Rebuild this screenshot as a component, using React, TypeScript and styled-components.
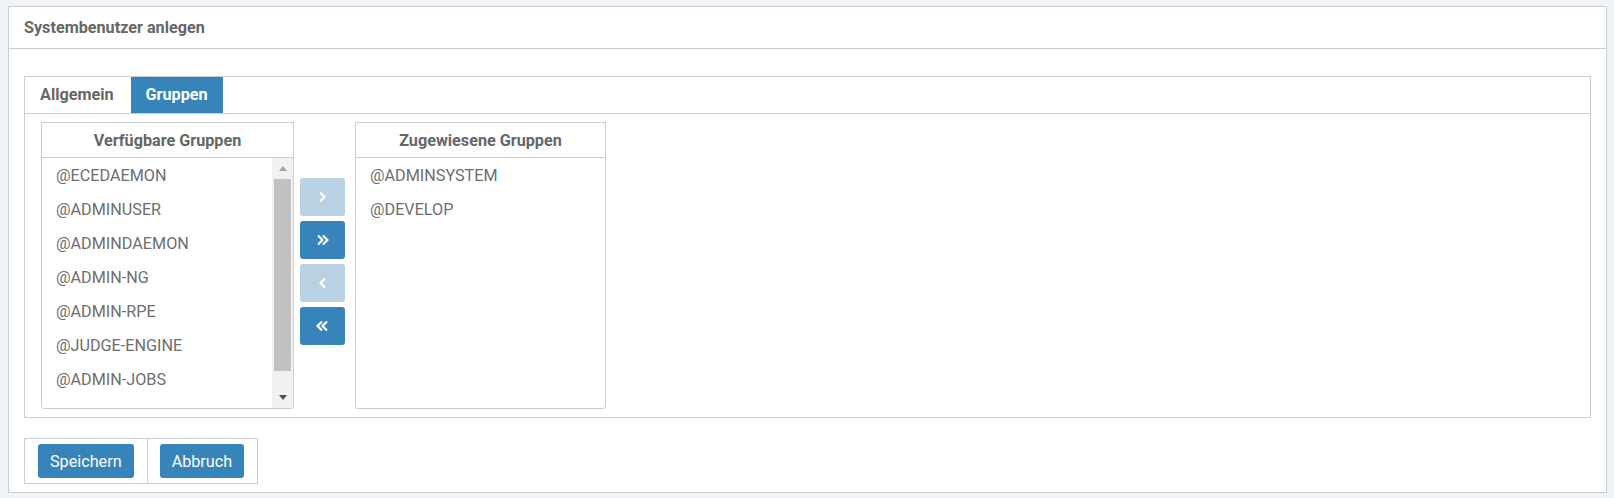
import React from 'react';
import styled, { createGlobalStyle, css } from 'styled-components';

const FS = '16.2px';
const BLUE = '#3784bb';
const BLUE_LIGHT = '#b8d1e3';
const BORDER = '#c9ced4';
const TEXT = '#666';
const ITEM_TEXT = '#6e6e6e';

const Global = createGlobalStyle`
  html, body { margin: 0; padding: 0; background: #f0f4f7; }
  body { font-family: Roboto, "Liberation Sans", Arial, sans-serif; color: ${TEXT}; }
  * { box-sizing: border-box; }
`;

const Page = styled.div`
  padding: 6px 7px 7px 8px;
`;

const Panel = styled.section`
  background: #fff;
  border: 1px solid ${BORDER};
`;

const PanelHeader = styled.header`
  height: 42px;
  border-bottom: 1px solid ${BORDER};
  padding: 0 15px;
  display: flex;
  align-items: center;
  font-size: ${FS};
  font-weight: 700;
  color: ${TEXT};
`;

const PanelBody = styled.div`
  padding: 27px 15px 8px 15px;
`;

const TabBox = styled.div`
  border: 1px solid ${BORDER};
`;

const TabBar = styled.div`
  display: flex;
  border-bottom: 1px solid ${BORDER};
`;

const Tab = styled.div<{ $active?: boolean }>`
  height: 36px;
  line-height: 36px;
  padding: 0 17px 0 15px;
  font-size: ${FS};
  font-weight: 700;
  color: ${TEXT};
  ${(p) =>
    p.$active &&
    css`
      background: ${BLUE};
      color: #fff;
      padding: 0 15px;
    `}
`;

const TabContent = styled.div`
  padding: 8px 16px;
`;

const DualList = styled.div`
  display: flex;
  align-items: flex-start;
`;

const ListBox = styled.div<{ $width: number }>`
  width: ${(p) => p.$width}px;
  border: 1px solid ${BORDER};
  border-radius: 0 0 3px 3px;
  background: #fff;
`;

const ListHeader = styled.div`
  height: 35px;
  border-bottom: 1px solid ${BORDER};
  display: flex;
  align-items: center;
  justify-content: center;
  font-size: ${FS};
  font-weight: 700;
  color: ${TEXT};
`;

const ListBody = styled.div`
  display: flex;
  height: 250px;
`;

const Items = styled.ul`
  flex: 1;
  list-style: none;
  margin: 0;
  padding: 1px 0 0 0;
  overflow: hidden;
`;

const Item = styled.li`
  height: 34px;
  line-height: 34px;
  padding-left: 14px;
  font-size: ${FS};
  color: ${ITEM_TEXT};
  white-space: nowrap;
`;

const Scrollbar = styled.div`
  width: 21px;
  background: #f1f1f1;
  display: flex;
  flex-direction: column;
`;

const ScrollButton = styled.div<{ $down?: boolean }>`
  height: 21px;
  display: flex;
  align-items: center;
  justify-content: center;
  &::before {
    content: '';
    width: 0;
    height: 0;
    border-left: 4.5px solid transparent;
    border-right: 4.5px solid transparent;
    ${(p) =>
      p.$down
        ? css`
            border-top: 5px solid #505050;
          `
        : css`
            border-bottom: 5px solid #a3a3a3;
          `}
  }
`;

const Thumb = styled.div`
  height: 192px;
  margin: 0 2px;
  background: #c1c1c1;
`;

const Track = styled.div`
  flex: 1;
`;

const MoveColumn = styled.div`
  display: flex;
  flex-direction: column;
  gap: 5px;
  padding-top: 56px;
  margin: 0 10px 0 6px;
`;

const MoveButton = styled.button<{ $disabled?: boolean }>`
  width: 45px;
  height: 38px;
  border: none;
  border-radius: 3px;
  padding: 0;
  display: flex;
  align-items: center;
  justify-content: center;
  background: ${(p) => (p.$disabled ? BLUE_LIGHT : BLUE)};
  cursor: ${(p) => (p.$disabled ? 'default' : 'pointer')};
`;

const FooterBar = styled.div`
  margin-top: 20px;
  display: inline-flex;
  border: 1px solid ${BORDER};
`;

const FooterCell = styled.div`
  padding: 5px 13px;
  & + & {
    border-left: 1px solid ${BORDER};
    padding-left: 12px;
  }
`;

const ActionButton = styled.button`
  height: 34px;
  padding: 0 12px;
  border: none;
  border-radius: 3px;
  background: ${BLUE};
  color: #fff;
  font-family: Roboto, "Liberation Sans", Arial, sans-serif;
  font-size: ${FS};
  cursor: pointer;
`;

function Chevron({ dir, double }: { dir: 'left' | 'right'; double?: boolean }) {
  const w = double ? 13 : 9;
  const flip = dir === 'left' ? `translate(${w} 0) scale(-1 1)` : undefined;
  return (
    <svg width={w} height="12" viewBox={`0 0 ${w} 12`} aria-hidden>
      <g transform={flip} fill="none" stroke="#fff" strokeWidth="2.2">
        <polyline points="2,1.5 6.5,6 2,10.5" />
        {double && <polyline points="7,1.5 11.5,6 7,10.5" />}
      </g>
    </svg>
  );
}

const available = [
  '@ECEDAEMON',
  '@ADMINUSER',
  '@ADMINDAEMON',
  '@ADMIN-NG',
  '@ADMIN-RPE',
  '@JUDGE-ENGINE',
  '@ADMIN-JOBS',
];

const assigned = ['@ADMINSYSTEM', '@DEVELOP'];

export default function App() {
  return (
    <>
      <Global />
      <Page>
        <Panel>
          <PanelHeader>Systembenutzer anlegen</PanelHeader>
          <PanelBody>
            <TabBox>
              <TabBar>
                <Tab>Allgemein</Tab>
                <Tab $active>Gruppen</Tab>
              </TabBar>
              <TabContent>
                <DualList>
                  <ListBox $width={253}>
                    <ListHeader>Verfügbare Gruppen</ListHeader>
                    <ListBody>
                      <Items>
                        {available.map((g) => (
                          <Item key={g}>{g}</Item>
                        ))}
                      </Items>
                      <Scrollbar>
                        <ScrollButton />
                        <Thumb />
                        <Track />
                        <ScrollButton $down />
                      </Scrollbar>
                    </ListBody>
                  </ListBox>
                  <MoveColumn>
                    <MoveButton $disabled aria-label="Auswahl hinzufügen">
                      <Chevron dir="right" />
                    </MoveButton>
                    <MoveButton aria-label="Alle hinzufügen">
                      <Chevron dir="right" double />
                    </MoveButton>
                    <MoveButton $disabled aria-label="Auswahl entfernen">
                      <Chevron dir="left" />
                    </MoveButton>
                    <MoveButton aria-label="Alle entfernen">
                      <Chevron dir="left" double />
                    </MoveButton>
                  </MoveColumn>
                  <ListBox $width={251}>
                    <ListHeader>Zugewiesene Gruppen</ListHeader>
                    <ListBody>
                      <Items>
                        {assigned.map((g) => (
                          <Item key={g}>{g}</Item>
                        ))}
                      </Items>
                    </ListBody>
                  </ListBox>
                </DualList>
              </TabContent>
            </TabBox>
            <FooterBar>
              <FooterCell>
                <ActionButton>Speichern</ActionButton>
              </FooterCell>
              <FooterCell>
                <ActionButton>Abbruch</ActionButton>
              </FooterCell>
            </FooterBar>
          </PanelBody>
        </Panel>
      </Page>
    </>
  );
}
